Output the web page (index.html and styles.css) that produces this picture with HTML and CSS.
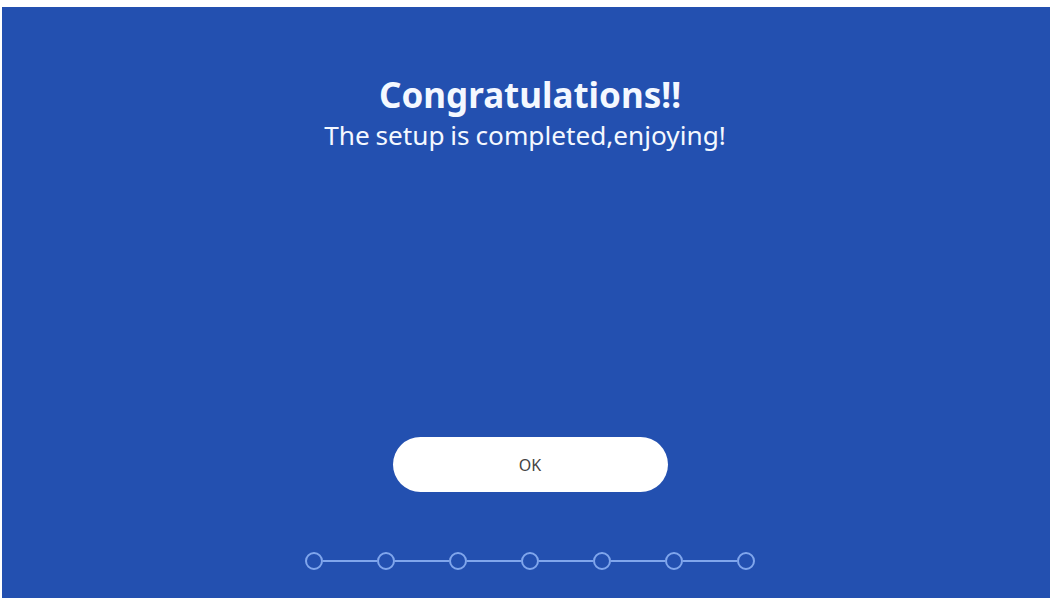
FILE: index.html
```html
<!DOCTYPE html>
<html lang="en">

<head>
    <meta charset="UTF-8">
    <title>Setup</title>
    <link rel="stylesheet" href="styles.css">
</head>

<body>
    <div class="screen">
        <div class="head">
            <h1 class="title">Congratulations!!</h1>
            <p class="sub">The setup is completed,enjoying!</p>
        </div>
        <button class="ok">OK</button>
        <!-- 步骤条：7 步 -->
        <div class="steps">
            <span class="dot"></span><span class="line"></span>
            <span class="dot"></span><span class="line"></span>
            <span class="dot"></span><span class="line"></span>
            <span class="dot"></span><span class="line"></span>
            <span class="dot"></span><span class="line"></span>
            <span class="dot"></span><span class="line"></span>
            <span class="dot"></span>
        </div>
    </div>
</body>

</html>
```

FILE: styles.css
```css
html,
body {
    margin: 0;
    padding: 0;
    background: #fff;
}

body {
    padding: 7px 3px 3px 2px;
    font-family: "Noto Sans", "Open Sans", sans-serif;
}

.screen {
    height: 591px;
    background: #2350b0;
    display: flex;
    flex-direction: column;
    align-items: center;
    box-sizing: border-box;
    padding-top: 67px;
    padding-left: 8px;
}

.head {
    text-align: center;
    color: #f4f8ff;
}

.title {
    margin: 0;
    font-size: 35px;
    font-weight: bold;
    line-height: 42px;
}

.sub {
    margin: 1px 10px 0 0;
    font-size: 26.2px;
    line-height: 36px;
    word-spacing: -1px;
}

.ok {
    margin-top: 284px;
    width: 275px;
    height: 55px;
    border: none;
    border-radius: 28px;
    background: #fff;
    color: #444;
    font-family: "Noto Sans", sans-serif;
    font-size: 16px;
    cursor: pointer;
}

.steps {
    margin-top: 60px;
    display: flex;
    align-items: center;
}

.dot {
    width: 14px;
    height: 14px;
    border: 2px solid #80a6ec;
    border-radius: 50%;
}

.line {
    width: 54px;
    height: 2px;
    background: #80a6ec;
}
```
